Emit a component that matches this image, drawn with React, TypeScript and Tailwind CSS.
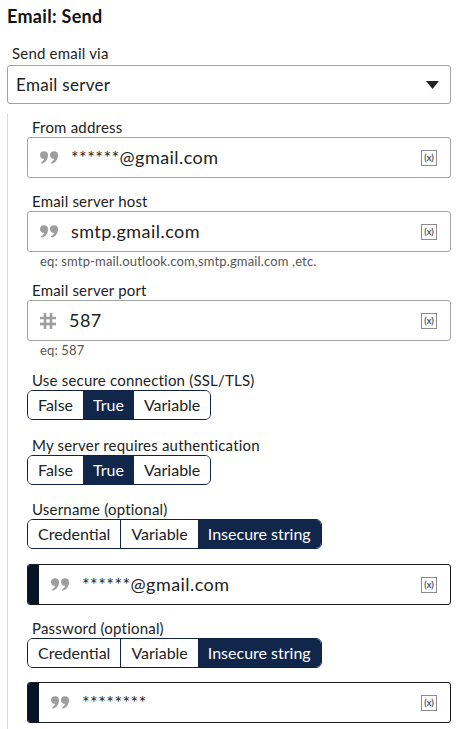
import React from "react";

const font = { fontFamily: "Lato, 'Open Sans', sans-serif" };

function QuoteIcon() {
  return (
    <svg width="18" height="13" viewBox="0 0 18 13" className="shrink-0">
      <path
        d="M0 4.2a4 4 0 1 1 8 0c0 4-2.4 7.4-6.3 8.6l-0.6-1.6c1.8-0.9 2.8-2.2 3-3.4A4 4 0 0 1 0 4.2z"
        fill="#9e9e9e"
      />
      <path
        d="M10 4.2a4 4 0 1 1 8 0c0 4-2.4 7.4-6.3 8.6l-0.6-1.6c1.8-0.9 2.8-2.2 3-3.4A4 4 0 0 1 10 4.2z"
        fill="#9e9e9e"
      />
    </svg>
  );
}

function HashIcon() {
  return (
    <svg width="16" height="16" viewBox="0 0 16 16" className="shrink-0">
      <g stroke="#9e9e9e" strokeWidth="2.6">
        <line x1="5" y1="0" x2="5" y2="16" />
        <line x1="11" y1="0" x2="11" y2="16" />
        <line x1="0" y1="5" x2="16" y2="5" />
        <line x1="0" y1="11" x2="16" y2="11" />
      </g>
    </svg>
  );
}

function VarIcon() {
  return (
    <span className="flex h-[16px] w-[16px] shrink-0 items-center justify-center border border-[#8c8c8c] text-[9px] font-bold leading-none text-[#555]">
      (x)
    </span>
  );
}

function Label({ children, className = "" }: { children: React.ReactNode; className?: string }) {
  return (
    <div className={"pl-[5px] text-[15px] leading-[20px] tracking-[0.2px] text-[#222] " + className}>
      {children}
    </div>
  );
}

function Hint({ children }: { children: React.ReactNode }) {
  return (
    <div className="pl-[13px] pt-[1px] text-[13px] leading-[16px] tracking-[0.15px] text-[#555]">
      {children}
    </div>
  );
}

function Input({
  value,
  icon = "quote",
  dark = false,
}: {
  value: string;
  icon?: "quote" | "hash";
  dark?: boolean;
}) {
  return (
    <div
      className={
        "flex h-[41px] items-center rounded-[3px] border bg-white " +
        (dark ? "border-[#1b1b1b]" : "border-[#a3a3a3]")
      }
    >
      {dark && <div className="h-full w-[11px] shrink-0 rounded-l-[2px] bg-[#081327]" />}
      <div className="pl-[12px]">{icon === "quote" ? <QuoteIcon /> : <HashIcon />}</div>
      <div className="ml-[13px] flex-1 text-[18px] tracking-[0.45px] text-[#222]">{value}</div>
      <div className="pr-[13px]">
        <VarIcon />
      </div>
    </div>
  );
}

function Toggle({ options, selected }: { options: string[]; selected: number }) {
  return (
    <div className="flex h-[30px] w-fit overflow-hidden rounded-[6px] border border-[#0f2445]">
      {options.map((o, i) => (
        <div
          key={o}
          className={
            "flex items-center px-[10px] text-[16px] " +
            (i === selected ? "bg-[#10264a] text-white" : "bg-white text-[#222]") +
            (i > 0 && i !== selected && i - 1 !== selected ? " border-l border-[#0f2445]" : "")
          }
        >
          {o}
        </div>
      ))}
    </div>
  );
}

export default function App() {
  return (
    <div className="h-[729px] w-[465px] overflow-hidden bg-white px-[7px] pt-[4px]" style={font}>
      <div className="text-[18px] font-bold leading-[24px] tracking-[0.3px] text-[#111]">Email: Send</div>
      <Label className="mt-[15px]">Send email via</Label>
      <div className="mt-[2px] flex h-[39px] w-[444px] items-center justify-between rounded-[3px] border border-[#a3a3a3] pl-[8px] pr-[11px]">
        <span className="text-[17px] tracking-[0.3px] text-[#222]">Email server</span>
        <svg width="13" height="8" viewBox="0 0 13 8">
          <path d="M0 0h13L6.5 8z" fill="#222" />
        </svg>
      </div>

      <div className="mt-[10px] w-[444px] border-l border-[#d9d9d9] pb-[10px] pl-[19px] pt-[3px]">
        <Label>From address</Label>
        <Input value="******@gmail.com" />

        <Label className="mt-[13px]">Email server host</Label>
        <Input value="smtp.gmail.com" />
        <Hint>eq: smtp-mail.outlook.com,smtp.gmail.com ,etc.</Hint>

        <Label className="mt-[11px]">Email server port</Label>
        <Input value="587" icon="hash" />
        <Hint>eq: 587</Hint>

        <Label className="mt-[12px]">Use secure connection (SSL/TLS)</Label>
        <Toggle options={["False", "True", "Variable"]} selected={1} />

        <Label className="mt-[15px]">My server requires authentication</Label>
        <Toggle options={["False", "True", "Variable"]} selected={1} />

        <Label className="mt-[14px]">Username (optional)</Label>
        <Toggle options={["Credential", "Variable", "Insecure string"]} selected={2} />
        <div className="mt-[15px]">
          <Input value="******@gmail.com" dark />
        </div>

        <Label className="mt-[13px]">Password (optional)</Label>
        <Toggle options={["Credential", "Variable", "Insecure string"]} selected={2} />
        <div className="mt-[14px]">
          <Input value="********" dark />
        </div>
      </div>
    </div>
  );
}
